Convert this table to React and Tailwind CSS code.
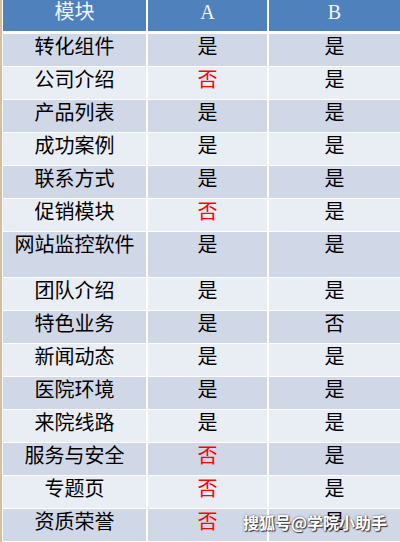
import React from 'react';

const rows = [
  { name: '转化组件', a: '是', b: '是' },
  { name: '公司介绍', a: '否', b: '是' },
  { name: '产品列表', a: '是', b: '是' },
  { name: '成功案例', a: '是', b: '是' },
  { name: '联系方式', a: '是', b: '是' },
  { name: '促销模块', a: '否', b: '是' },
  { name: '网站监控软件', a: '是', b: '是', tall: true },
  { name: '团队介绍', a: '是', b: '是' },
  { name: '特色业务', a: '是', b: '否' },
  { name: '新闻动态', a: '是', b: '是' },
  { name: '医院环境', a: '是', b: '是' },
  { name: '来院线路', a: '是', b: '是' },
  { name: '服务与安全', a: '否', b: '是' },
  { name: '专题页', a: '否', b: '是' },
  { name: '资质荣誉', a: '否', b: '是' },
];

const font = { fontFamily: '"Liberation Serif", "Noto Sans CJK SC", serif' };

const Cell = ({ children, bg, red }) => (
  <div
    className={`${bg} text-center text-[20px] leading-[20px] pt-[3px] ${red ? 'text-[#ff0000]' : 'text-black'}`}
  >
    {children}
  </div>
);

const App = () => {
  return (
    <div className="relative w-[400px] h-[542px] overflow-hidden bg-white flex" style={font}>
      <div className="w-[2px] bg-[#d9bc9c]" />
      <div className="flex-1 pl-px">
        {/* Header */}
        <div className="grid grid-cols-[143px_119px_1fr] gap-x-[2px] h-[31px] mb-[3px]">
          {['模块', 'A', 'B'].map((h) => (
            <div key={h} className="bg-[#4f81bd] text-[#f4f6fb] text-center text-[20px] leading-[20px] pt-[2px]">
              {h}
            </div>
          ))}
        </div>

        {/* Body */}
        <div className="flex flex-col gap-y-px">
          {rows.map((r, i) => {
            const bg = i % 2 === 0 ? 'bg-[#d0d8e8]' : 'bg-[#e9edf4]';
            return (
              <div
                key={r.name}
                className={`grid grid-cols-[143px_119px_1fr] gap-x-[2px] ${r.tall ? 'h-[45px]' : 'h-[32px]'}`}
              >
                <Cell bg={bg}>{r.name}</Cell>
                <Cell bg={bg} red={r.a === '否'}>{r.a}</Cell>
                <Cell bg={bg} red={r.b === '否' && false}>{r.b}</Cell>
              </div>
            );
          })}
        </div>
      </div>

      {/* Watermark */}
      <div
        className="absolute left-[243px] top-[512px] text-white font-bold text-[16px] leading-[20px] tracking-[0px]"
        style={{
          fontFamily: '"Noto Sans CJK SC", sans-serif',
          textShadow: '1px 1px 1px #333, 0 0 2px #555',
        }}
      >
        搜狐号@学院小助手
      </div>
    </div>
  );
};

export default App;
